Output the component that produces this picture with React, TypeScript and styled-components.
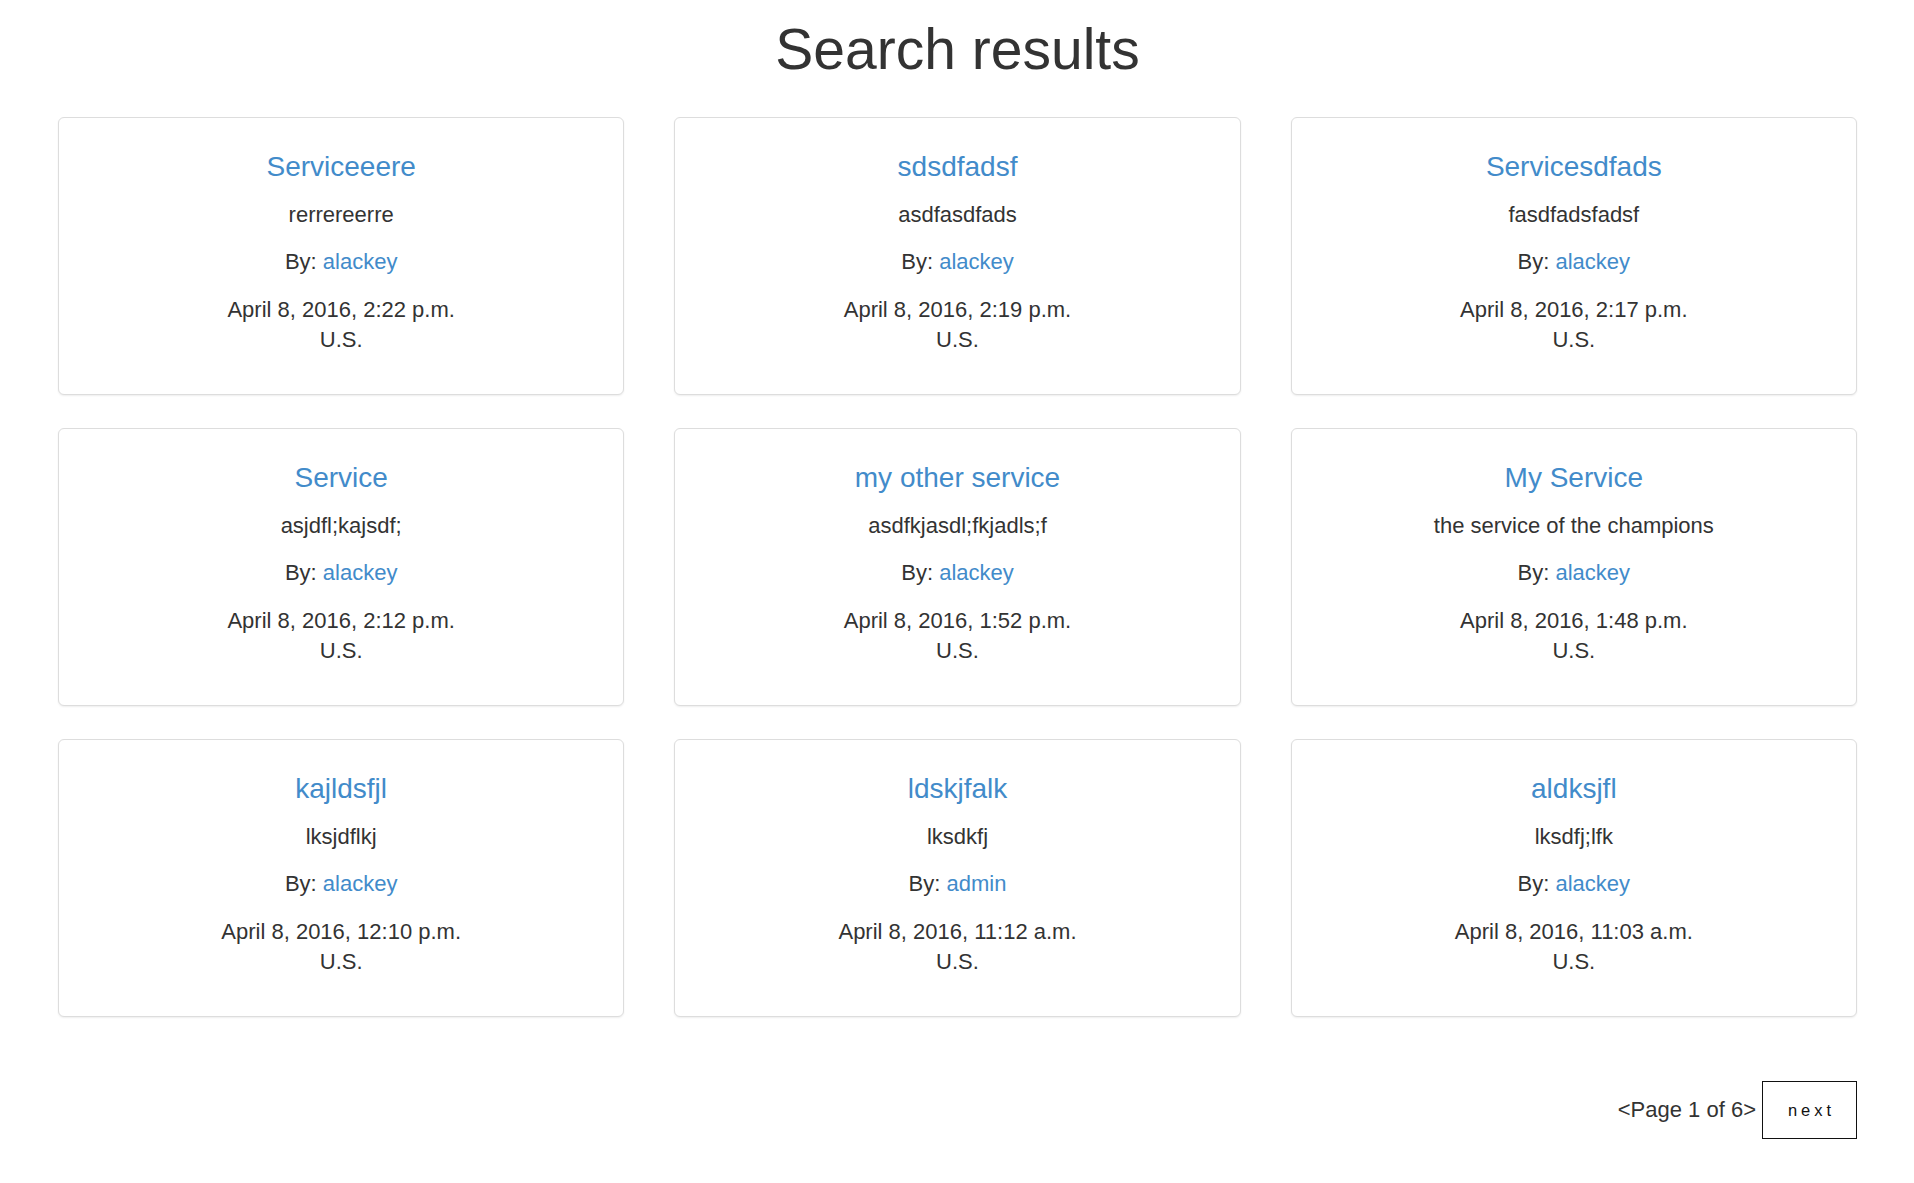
import React from "react";
import styled, { createGlobalStyle } from "styled-components";

const GlobalStyle = createGlobalStyle`
  html, body {
    margin: 0;
    padding: 0;
    background: #ffffff;
  }
  body {
    font-family: "Liberation Sans", Helvetica, Arial, sans-serif;
    color: #333333;
    font-size: 22px;
    line-height: 30px;
  }
  * { box-sizing: border-box; }
`;

const Page = styled.div`
  display: flex;
  flex-direction: column;
  padding: 0 57px 44px 58px;
`;

const Heading = styled.h1`
  margin: 18px 0 37px;
  font-size: 57px;
  line-height: 62px;
  font-weight: 400;
  text-align: center;
  color: #333333;
`;

const Grid = styled.div`
  display: grid;
  grid-template-columns: repeat(3, 1fr);
  column-gap: 50px;
  row-gap: 33px;
`;

const Card = styled.div`
  display: flex;
  flex-direction: column;
  align-items: center;
  text-align: center;
  padding: 34px 20px 39px;
  border: 1px solid #dddddd;
  border-radius: 6px;
  box-shadow: 0 1px 2px rgba(0, 0, 0, 0.07);
  background: #ffffff;
`;

const Title = styled.a`
  display: block;
  font-size: 28px;
  line-height: 30px;
  color: #428bca;
  text-decoration: none;
  margin-bottom: 18px;
`;

const Line = styled.p<{ $gap?: number }>`
  margin: 0 0 ${(p) => p.$gap ?? 0}px;
  font-size: 22px;
  line-height: 30px;
  color: #333333;
`;

const Link = styled.a`
  color: #428bca;
  text-decoration: none;
`;

const Pager = styled.div`
  display: flex;
  justify-content: flex-end;
  align-items: center;
  margin-top: 64px;
  gap: 6px;
`;

const PagerText = styled.span`
  font-size: 22px;
  line-height: 30px;
  color: #333333;
`;

const NextButton = styled.button`
  width: 95px;
  height: 58px;
  border: 1.5px solid #111111;
  background: #ffffff;
  font-family: "Liberation Sans", Helvetica, Arial, sans-serif;
  font-size: 16.5px;
  letter-spacing: 4px;
  padding: 0 0 0 4px;
  color: #111111;
  cursor: pointer;
`;

type Result = {
  title: string;
  desc: string;
  author: string;
  date: string;
};

const results: Result[] = [
  { title: "Serviceeere", desc: "rerrereerre", author: "alackey", date: "April 8, 2016, 2:22 p.m." },
  { title: "sdsdfadsf", desc: "asdfasdfads", author: "alackey", date: "April 8, 2016, 2:19 p.m." },
  { title: "Servicesdfads", desc: "fasdfadsfadsf", author: "alackey", date: "April 8, 2016, 2:17 p.m." },
  { title: "Service", desc: "asjdfl;kajsdf;", author: "alackey", date: "April 8, 2016, 2:12 p.m." },
  { title: "my other service", desc: "asdfkjasdl;fkjadls;f", author: "alackey", date: "April 8, 2016, 1:52 p.m." },
  { title: "My Service", desc: "the service of the champions", author: "alackey", date: "April 8, 2016, 1:48 p.m." },
  { title: "kajldsfjl", desc: "lksjdflkj", author: "alackey", date: "April 8, 2016, 12:10 p.m." },
  { title: "ldskjfalk", desc: "lksdkfj", author: "admin", date: "April 8, 2016, 11:12 a.m." },
  { title: "aldksjfl", desc: "lksdfj;lfk", author: "alackey", date: "April 8, 2016, 11:03 a.m." },
];

export default function App() {
  return (
    <>
      <GlobalStyle />
      <Page>
        <Heading>Search results</Heading>
        <Grid>
          {results.map((r, i) => (
            <Card key={i}>
              <Title href="#">{r.title}</Title>
              <Line $gap={17}>{r.desc}</Line>
              <Line $gap={18}>
                By: <Link href="#">{r.author}</Link>
              </Line>
              <Line>{r.date}</Line>
              <Line>U.S.</Line>
            </Card>
          ))}
        </Grid>
        <Pager>
          <PagerText>&lt;Page 1 of 6&gt;</PagerText>
          <NextButton>next</NextButton>
        </Pager>
      </Page>
    </>
  );
}
